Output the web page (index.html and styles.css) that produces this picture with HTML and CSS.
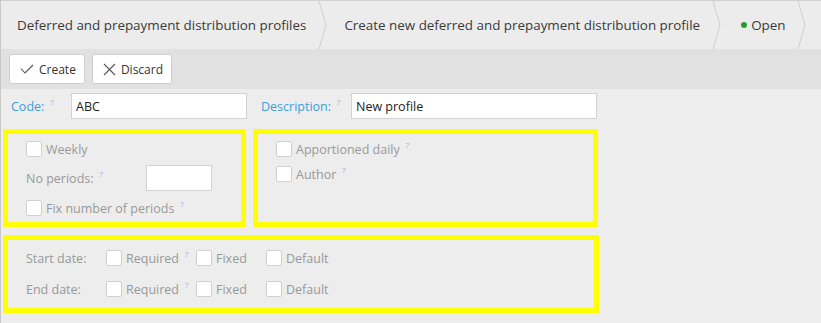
FILE: index.html
```html
<!DOCTYPE html>
<html>
<head>
<meta charset="utf-8">
<link rel="stylesheet" href="styles.css">
</head>
<body>
<div class="page">
  <nav class="crumbs">
    <div class="crumb c1">Deferred and prepayment distribution profiles<svg class="chev" width="10" height="48" viewBox="0 0 10 48"><path d="M1 0 L8 24 L1 48" fill="none" stroke="#cfcfcf" stroke-width="1"/></svg></div>
    <div class="crumb c2">Create new deferred and prepayment distribution profile<svg class="chev" width="10" height="48" viewBox="0 0 10 48"><path d="M1 0 L8 24 L1 48" fill="none" stroke="#cfcfcf" stroke-width="1"/></svg></div>
    <div class="crumb c3"><span class="dot"></span>Open<svg class="chev" width="10" height="48" viewBox="0 0 10 48"><path d="M1 0 L8 24 L1 48" fill="none" stroke="#cfcfcf" stroke-width="1"/></svg></div>
  </nav>
  <div class="toolbar">
    <button class="btn"><svg width="14" height="12" viewBox="0 0 14 12"><path d="M1 5.5 L5 10 L13 2" fill="none" stroke="#555" stroke-width="1.1"/></svg>Create</button>
    <button class="btn"><svg width="13" height="13" viewBox="0 0 13 13"><path d="M1 1 L12 12 M12 1 L1 12" fill="none" stroke="#555" stroke-width="1.1"/></svg>Discard</button>
  </div>
  <div class="form">
    <div class="toprow">
      <label class="blue lbl-code">Code:<sup class="q">?</sup></label>
      <input class="txt code" value="ABC">
      <label class="blue lbl-desc">Description:<sup class="q">?</sup></label>
      <input class="txt desc" value="New profile">
    </div>
    <div class="boxes">
      <div class="box b1">
        <div class="row"><span class="cb"></span><span class="t">Weekly</span></div>
        <div class="row np"><span class="t nplabel">No periods:<sup class="q">?</sup></span><span class="num"></span></div>
        <div class="row"><span class="cb"></span><span class="t">Fix number of periods<sup class="q">?</sup></span></div>
      </div>
      <div class="box b2">
        <div class="row"><span class="cb"></span><span class="t">Apportioned daily<sup class="q">?</sup></span></div>
        <div class="row"><span class="cb"></span><span class="t">Author<sup class="q">?</sup></span></div>
      </div>
    </div>
    <div class="box b3">
      <div class="drow">
        <span class="t dl">Start date:</span>
        <span class="cb"></span><span class="t w-req">Required<sup class="q">?</sup></span>
        <span class="cb"></span><span class="t w-fix">Fixed</span>
        <span class="cb"></span><span class="t">Default</span>
      </div>
      <div class="drow">
        <span class="t dl">End date:</span>
        <span class="cb"></span><span class="t w-req">Required<sup class="q">?</sup></span>
        <span class="cb"></span><span class="t w-fix">Fixed</span>
        <span class="cb"></span><span class="t">Default</span>
      </div>
    </div>
  </div>
</div>
</body>
</html>
```
FILE: styles.css
```css
* { box-sizing: border-box; }
html, body { margin: 0; padding: 0; }
body {
  background: #ededed;
  font-family: "Open Sans", "Noto Sans", sans-serif;
  color: #333;
  width: 821px;
  height: 323px;
  overflow: hidden;
}
.page { border-left: 1px solid #c8c8c8; min-height: 323px; }
.crumbs {
  display: flex;
  height: 49px;
  border-top: 1px solid #d2d2d2;
  background: #ececec;
  font-size: 13.4px;
}
.crumb {
  display: flex;
  align-items: center;
  height: 48px;
  white-space: nowrap;
  color: #3a3a3a;
}
.c1 { padding-left: 16px; }
.c1 .chev { margin-left: 12px; }
.c2 { padding-left: 16px; }
.c2 .chev { margin-left: 12px; }
.c3 { padding-left: 19px; }
.c3 .chev { margin-left: 12px; }
.dot {
  width: 6px; height: 6px; border-radius: 50%;
  background: #2e9a2e; margin-right: 4px;
}
.toolbar {
  display: flex;
  gap: 7px;
  height: 40px;
  background: #e1e1e1;
  padding: 5px 8px;
}
.btn {
  display: flex; align-items: center; gap: 5px;
  height: 30px;
  padding: 0 8px 0 10px;
  background: #fff;
  border: 1px solid #cfcfcf;
  border-radius: 3px;
  font-family: inherit;
  font-size: 12px;
  color: #333;
}
.form { padding: 4px 0 0 2px; }
.toprow {
  display: flex; align-items: center;
  height: 26px;
}
.blue { color: #3b9fd9; font-size: 12.5px; }
.q { color: #b9a3d6; font-size: 8px; margin-left: 6px; vertical-align: top; position: relative; top: -2px; }
.lbl-code { width: 68px; padding-left: 8px; }
.lbl-desc { width: 90px; padding-left: 0; }
.txt {
  height: 26px;
  border: 1px solid #d2d2d2;
  background: #fff;
  font-family: inherit;
  font-size: 12.5px;
  color: #222;
  padding: 0 4px;
  outline: none;
}
.code { width: 176px; margin-right: 14px; }
.desc { width: 246px; }
.boxes { display: flex; gap: 7px; margin-top: 10px; }
.box { border: 5px solid #ffff00; }
.b1 { width: 243px; height: 98px; padding: 7px 0 0 18px; }
.b2 { width: 345px; height: 98px; padding: 7px 0 0 18px; }
.row { display: flex; align-items: center; height: 16px; margin-bottom: 9px; }
.b1 .row.np { height: 26px; margin: -1px 0 9px; }
.cb {
  width: 16px; height: 16px; flex: none;
  background: #fff; border: 1px solid #d0d0d0; border-radius: 2px;
}
.t { color: #999; font-size: 12.5px; margin-left: 4px; white-space: nowrap; }
.nplabel { margin-left: 0; width: 120px; }
.num { width: 66px; height: 26px; background: #fff; border: 1px solid #d2d2d2; }
.b3 { width: 596px; height: 78px; margin-top: 8px; padding: 10px 0 0 18px; }
.drow { display: flex; align-items: center; height: 16px; margin-bottom: 15px; }
.dl { margin-left: 0; width: 80px; }
.w-req { width: 70px; }
.w-fix { width: 50px; }
```
